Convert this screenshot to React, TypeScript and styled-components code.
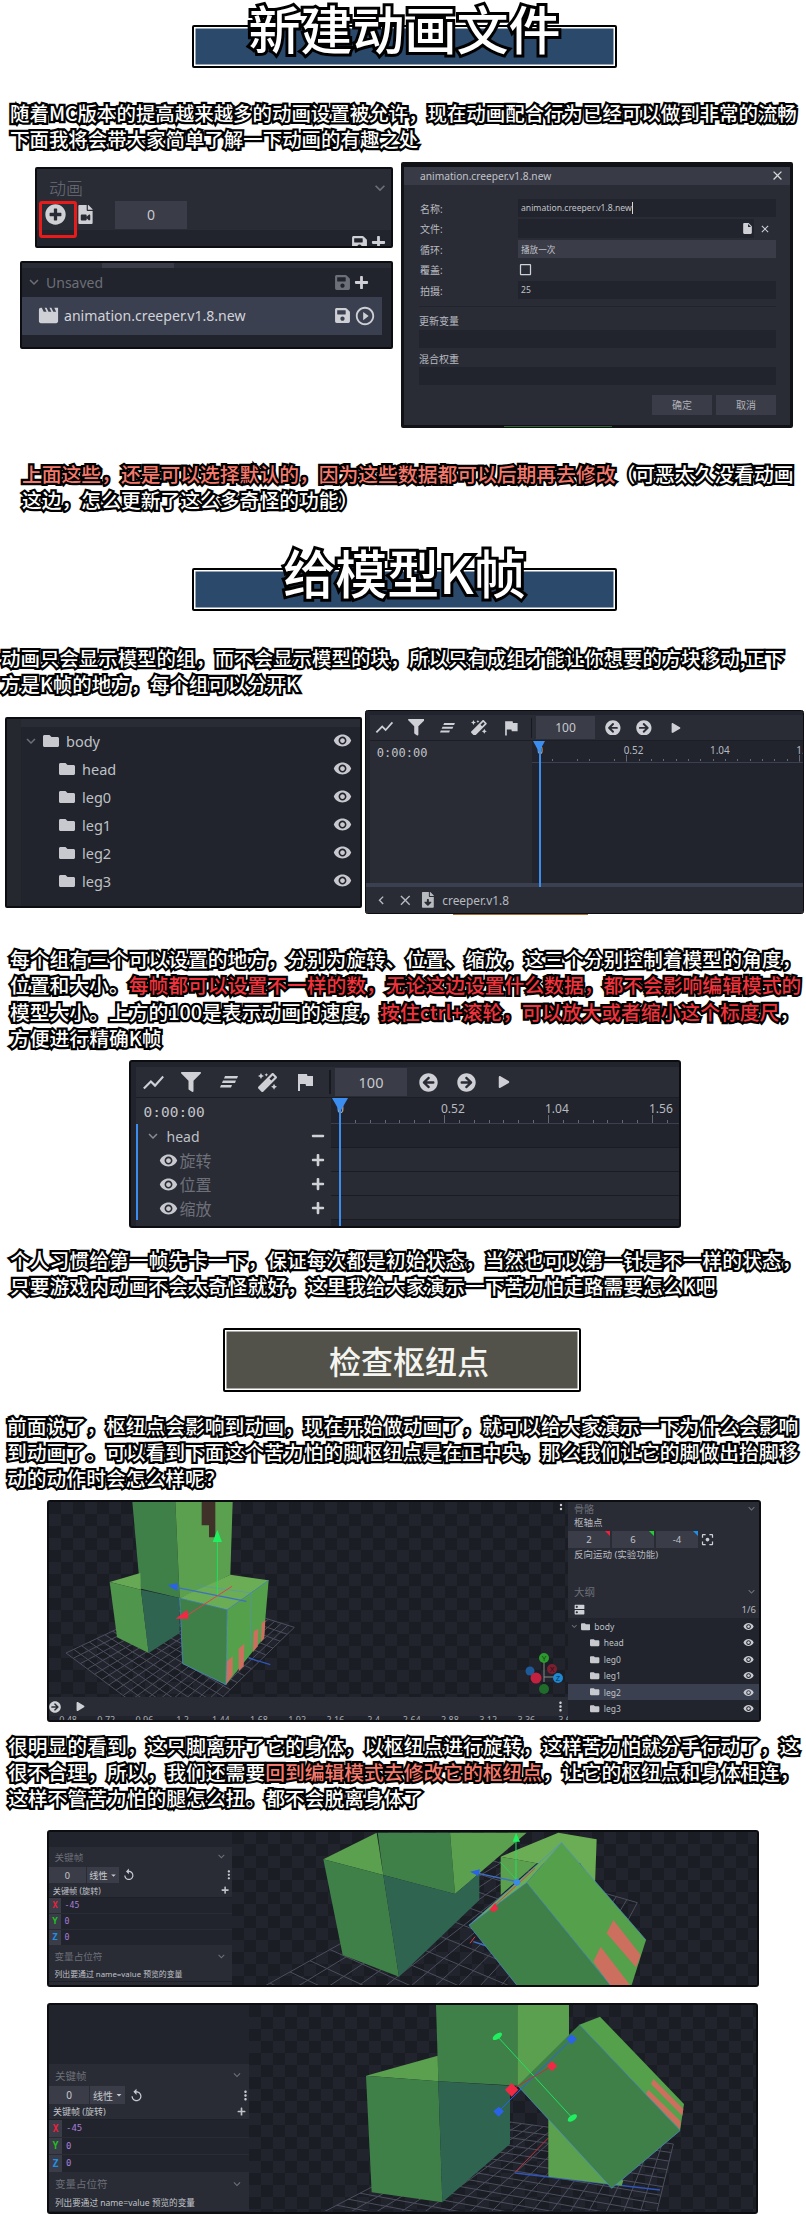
import React from "react";
import styled, { createGlobalStyle } from "styled-components";
import { FaFileVideo, FaSave, FaPlus, FaFolder, FaFilter, FaMagic, FaArrowCircleLeft, FaArrowCircleRight, FaPlay, FaPlusCircle, FaFileDownload, FaMinus } from "react-icons/fa";
import { MdExpandMore, MdMovie, MdPlayCircleOutline, MdInsertDriveFile, MdClose, MdCheckBoxOutlineBlank, MdVisibility, MdShowChart, MdFlag, MdFilterCenterFocus, MdReplay, MdDns, MdChevronLeft, MdArrowDropDown, MdMoreVert } from "react-icons/md";

const UI = `"Noto Sans", "Noto Sans CJK SC", sans-serif`;
const MONO = `"DejaVu Sans Mono", "Liberation Mono", monospace`;

const Global = createGlobalStyle`
  html, body { margin: 0; padding: 0; background: #fff; }
  body { overflow: hidden; font-family: ${UI}; }
  svg { flex-shrink: 0; }
`;

const Page = styled.main`
  width: 806px; height: 2214px; overflow: hidden;
  display: flex; flex-direction: column; align-items: flex-start;
`;

/* ---------- headings ---------- */
const Banner = styled.div<{ $top: number }>`
  position: relative; box-sizing: border-box; margin: ${p => p.$top}px 0 0 192px;
  width: 425px; height: 43px; background: #2b4a6b; border: 2px solid #000; border-radius: 2px;
  box-shadow: inset 0 0 0 1.5px #fff;
`;
const BannerTitle = styled.h1<{ $up: number }>`
  position: absolute; left: 0; right: 0; top: ${p => -p.$up}px; margin: 0; text-align: center;
  font: 500 52px/52px "Noto Sans CJK SC", sans-serif; color: #fff; white-space: nowrap;
  -webkit-text-stroke: 6px #000; paint-order: stroke fill;
`;
const PlainBanner = styled.h2`
  box-sizing: border-box; margin: 29px 0 0 223px; width: 358px; height: 64px; padding-left: 14px;
  display: flex; align-items: center; justify-content: center;
  background: #52524a; border: 2px solid #000; border-radius: 2px; box-shadow: inset 0 0 0 1.5px #fff;
  font: 500 32px/1 "Noto Sans CJK SC", sans-serif; color: #f4f4f0;
`;

/* ---------- outlined article text ---------- */
const Para = styled.div<{ $top: number; $x: number; $lh?: number; $size?: number }>`
  margin: ${p => p.$top}px 0 0 ${p => p.$x}px;
  font: 500 ${p => p.$size ?? 19.8}px/${p => p.$lh ?? 26}px "Noto Sans CJK SC", sans-serif;
  color: #fff; white-space: nowrap;
  -webkit-text-stroke: 4.5px #000; paint-order: stroke fill;
`;
const Line = styled.div``;
const Red = styled.span`color: #f0333c;`;
const Salmon = styled.span`color: #f4796c;`;

/* ---------- first row: panels ---------- */
const PanelRow = styled.section<{ $top: number }>`
  display: flex; margin-top: ${p => p.$top}px;
`;
const LeftStack = styled.div`
  width: 393px; padding-top: 5px; display: flex; flex-direction: column; align-items: flex-end; gap: 13px;
`;
const DarkCard = styled.div<{ $w: number; $h: number; $bg?: string }>`
  box-sizing: border-box; width: ${p => p.$w}px; height: ${p => p.$h}px; border: 2px solid #0c0d10; border-radius: 2px;
  background: ${p => p.$bg ?? "#21242c"}; overflow: hidden; position: relative; color: #cfd0d6;
`;
const PanelHead = styled.div`
  display: flex; align-items: center; justify-content: space-between; height: 38px; padding: 0 1px 0 12px;
  font-size: 17px; color: #6c6f78; font-weight: 300;
`;
const ToolRow = styled.div`
  display: flex; align-items: center; height: 28px; padding-left: 8px; color: #cfd0d6; margin-top: -6px;
`;
const NumberBox = styled.div`
  width: 72px; height: 28px; margin-left: 11px; background: #3a3d48; color: #c8c9cf; font-size: 14px;
  display: flex; align-items: center; justify-content: center;
`;
const RedFrame = styled.div`
  position: absolute; left: 2px; top: 32px; width: 38px; height: 37px; box-sizing: border-box;
  border: 3px solid #e81b1b; border-radius: 3px;
`;
const ClippedStrip = styled.div`
  height: 12px; margin-top: 1px; background: #21242c; overflow: hidden; display: flex; justify-content: flex-end;
  gap: 3px; padding: 5px 5px 0 0; color: #cfd0d6;
`;
const TabEdge = styled.div`
  height: 5px; background: #292c35; display: flex; padding-left: 77px; 
`;
const TabPiece = styled.div`
  width: 72px; background: #3a3d48; margin-left: 3px;
`;
const UnsavedRow = styled.div`
  height: 29px; display: flex; align-items: center; padding: 0 22px 0 3px; gap: 3px;
  font-size: 14px; color: #6c6f78;
`;
const Spacer = styled.div`flex: 1;`;
const AnimRow = styled.div`
  width: 360px; height: 38px; background: #3b4050; display: flex; align-items: center; gap: 4px;
  padding: 0 6px 0 15px; box-sizing: border-box; font-size: 14.1px; color: #d2d3d9;
`;
const IconPair = styled.div`display: flex; align-items: center; gap: 3px;`;

/* modal */
const Modal = styled.div`
  position: relative; box-sizing: border-box; width: 392px; height: 266px; margin-left: 8px; background: #292c35;
  border: 3px solid #111216; border-top-width: 5px; border-radius: 2px; color: #b8bac0; font-size: 10px;
`;
const ModalHead = styled.div`
  height: 18px; background: #383b46; display: flex; align-items: center; justify-content: space-between;
  padding: 0 5px 0 16px; font-size: 10.2px; color: #c2c3c9;
`;
const ModalBody = styled.div`padding: 14px 14px 0 15px;`;
const FormRows = styled.div`display: flex; flex-direction: column; gap: 2px;`;
const FormRow = styled.div`
  display: grid; grid-template-columns: 98px 1fr; align-items: center; height: 18.5px; padding-left: 1px;
`;
const Field = styled.div<{ $w?: number; $light?: boolean }>`
  box-sizing: border-box; height: 100%; width: ${p => (p.$w ? p.$w + "px" : "100%")};
  background: ${p => (p.$light ? "#3a3d48" : "#21242c")};
  display: flex; align-items: center; padding-left: 3px; font-size: 8.6px; color: #c2c3c9;
`;
const FileField = styled(Field)`justify-content: flex-end; padding-right: 0; color: #cfd0d6;`;
const Caret = styled.span`display: inline-block; width: 1px; height: 12px; background: #d8d8d8;`;
const FieldLine = styled.div`display: flex; height: 100%; align-items: center; color: #d0d1d6;`;
const FieldEnd = styled.div`flex: 1; display: flex; justify-content: center;`;
const Divider = styled.div`height: 1px; background: #21242c; margin-top: 7px;`;
const BlockLabel = styled.div<{ $top: number }>`margin-top: ${p => p.$top}px; line-height: 14px; height: 14px;`;
const BlockField = styled.div<{ $top: number }>`margin-top: ${p => p.$top}px; height: 18px; background: #21242c;`;
const ModalActions = styled.div`display: flex; justify-content: flex-end; gap: 4px; margin-top: 9.5px;`;
const ModalBtn = styled.div`
  width: 60px; height: 20px; background: #3a3d48; display: flex; align-items: center; justify-content: center; color: #b0b2b8;
`;
const Sliver = styled.div<{ $l: number; $w: number; $c: string }>`
  position: absolute; left: ${p => p.$l}px; bottom: -2px; width: ${p => p.$w}px; height: 1px; background: ${p => p.$c};
`;

/* ---------- outliner ---------- */
const TimelineSplit = styled.section`display: flex; margin-top: 13px; align-items: flex-start;`;
const OutlinerCard = styled(DarkCard)`margin: 7px 0 0 5px;`;
const OutlinerTop = styled.div`height: 8px; background: #292c35; border-left: 14px solid #25282f;`;
const OutlinerBody = styled.div`border-left: 14px solid #25282f; height: 100%;`;
const OutlineList = styled.div<{ $zoom?: number }>`zoom: ${p => p.$zoom ?? 1};`;
const OutlineRow = styled.div<{ $level: number; $active?: boolean }>`
  height: 28px; display: flex; align-items: center; position: relative; color: #bfc1c7; font-size: 14.5px;
  padding-left: ${p => (p.$level ? 38 : 22)}px; padding-right: 8px;
  background: ${p => (p.$active ? "#3b4050" : "transparent")};
`;
const OutlineChevron = styled.span`position: absolute; left: 1px; top: 5px; color: #6c6f78; display: flex;`;
const OutlineLabel = styled.span`margin-left: 7px; flex: 1;`;

/* ---------- timeline ---------- */
const TimelineRoot = styled.section<{ $zoom: number; $w: number; $h: number; $left: number; $top?: number }>`
  zoom: ${p => p.$zoom}; box-sizing: border-box; width: ${p => p.$w}px; height: ${p => p.$h}px;
  margin: ${p => p.$top ?? 0}px 0 0 ${p => p.$left}px;
  background: #21242c; border: 2px solid #0c0d10; border-radius: 3px; display: flex; flex-direction: column;
  position: relative; color: #cfd0d6;
`;
const TopStrip = styled.div`height: 5px; flex: none;`;
const Toolbar = styled.div`
  height: 30px; flex: none; margin-left: 5px; background: #292c35; border-bottom: 1px solid #1c1e25; display: flex; align-items: center;
`;
const ToolSlot = styled.div`width: 38px; flex: none; display: flex; justify-content: center; align-items: center;`;
const ToolSlots = styled.div`display: flex; margin-left: -1.5px;`;
const ToolSep = styled.div`width: 2px; height: 24px; background: #17191e; margin: 0 4px 0 5px;`;
const SpeedBox = styled.div`
  width: 72px; height: 28px; background: #3a3d48; display: flex; align-items: center; justify-content: center;
  font-size: 14.5px; color: #c8c9cf; margin-right: 2px;
`;
const Track = styled.div`flex: 1; min-height: 0; position: relative; margin-left: 5px; display: flex; flex-direction: column;`;
const HeadRow = styled.div`display: flex; height: 26px; flex: none;`;
const TimeCell = styled.div`
  width: 195px; background: #292c35; display: flex; align-items: center; padding-left: 8px; box-sizing: border-box;
  font: 14.5px ${MONO}; color: #c2c3c9; padding-top: 2px;
`;
const Ruler = styled.div`
  flex: 1; overflow: hidden; display: flex; align-items: flex-start; padding-top: 2px; padding-left: 6.5px;
  border-bottom: 1px solid #3b4050; color: #b8bac0; font-size: 12px; line-height: 18px;
  background-image:
    repeating-linear-gradient(90deg, #666a75 0 1px, transparent 1px 14.86px),
    repeating-linear-gradient(90deg, #666a75 0 1px, transparent 1px 104px);
  background-size: 100% 3px, 100% 8px;
  background-position: 9.5px 100%, 9.5px 100%;
  background-repeat: no-repeat;
`;
const RulerMark = styled.span`width: 104px; flex: none;`;
const RowsArea = styled.div`flex: 1; min-height: 0; display: flex;`;
const LeftPane = styled.div`width: 195px; flex: none; background: #292c35; position: relative;`;
const RightPane = styled.div`flex: 1; display: flex; flex-direction: column;`;
const GroupColumn = styled.div`border-left: 2px solid #3b8ef0; margin-left: 0;`;
const TrackLabel = styled.div<{ $sub?: boolean }>`
  height: 24px; display: flex; align-items: center; padding: 0 4px 0 ${p => (p.$sub ? 21 : 6)}px; gap: ${p => (p.$sub ? 2 : 5)}px;
  font-size: ${p => (p.$sub ? 16 : 14)}px; color: ${p => (p.$sub ? "#6e7079" : "#bfc1c7")};
  font-family: ${UI};
`;
const TrackEnd = styled.div`margin-left: auto; margin-right: 2px; display: flex; color: #d0d1d6;`;
const TrackLane = styled.div<{ $dark?: boolean }>`
  height: 23px; flex: none; border-bottom: 1px solid #1a1c22; background: ${p => (p.$dark ? "#21242c" : "#282b33")};
`;
const Playhead = styled.div`
  position: absolute; left: 203.5px; top: 0; bottom: 0; width: 2px; background: #3b8ef0;
  &::before {
    content: ""; position: absolute; left: -7px; top: 0; border: 8px solid transparent; border-top: 14px solid #3b8ef0; border-bottom: 0;
  }
`;
const StatusBar = styled.div`height: 5px; background: #3b4050; flex: none; margin-left: -5px;`;
const FooterBar = styled.div`
  height: 31px; flex: none; display: flex; align-items: center; background: #292c35; gap: 8px; padding-left: 9px;
  font-size: 14.3px; color: #b8bac0;
`;

/* ---------- scenes ---------- */
const SceneCard = styled.section<{ $top: number; $w: number; $h: number }>`
  box-sizing: border-box; margin: ${p => p.$top}px 0 0 47px; width: ${p => p.$w}px; height: ${p => p.$h}px;
  background: #21242c; border: 2px solid #0c0d10; border-radius: 3px; display: flex; overflow: hidden;
`;
const SceneColumn = styled.div`width: 519px; flex: none; display: flex; flex-direction: column;`;
const Viewport = styled.div<{ $w?: number; $h?: number }>`
  ${p => (p.$w ? `width:${p.$w}px; flex:none;` : "flex:1;")} height: ${p => (p.$h ? p.$h + "px" : "100%")};
  background: repeating-conic-gradient(#21242c 0 25%, #1a1d24 0 50%) 0 0 / 24px 24px;
  overflow: hidden; line-height: 0;
`;
const MiniBar = styled.div`
  height: 19px; background: #292c35; display: flex; align-items: center; color: #cfd0d6; position: relative;
`;
const MiniTicks = styled.div`
  height: 4px; overflow: hidden; display: flex; background: #21242c; color: #a8aab0; font-size: 9px; line-height: 12px;
`;
const MiniTick = styled.span`width: 38.2px; flex: none; margin-top: -2px; text-align: center;`;
const SidePanel = styled.aside`
  width: 191px; flex: none; background: #292c35; color: #b8bac0; font-size: 9.5px; display: flex; flex-direction: column;
`;
const SideHead = styled.div<{ $h: number; $size: number; $top?: number }>`
  height: ${p => p.$h}px; margin-top: ${p => p.$top ?? 0}px; padding: 0 1px 0 6px; display: flex; align-items: center; justify-content: space-between;
  color: #6c6f78; font-size: ${p => p.$size}px; overflow: hidden;
`;
const SideText = styled.div<{ $top: number }>`margin-top: ${p => p.$top}px; padding-left: 6px; line-height: 14px;`;
const TripleRow = styled.div`display: flex; align-items: center; margin-top: 1px; height: 17px;`;
const TripleBox = styled.div<{ $corner: string }>`
  position: relative; width: 42px; height: 17px; margin-right: 2px; background: #3a3d48; color: #c0c2c8;
  display: flex; align-items: center; justify-content: center; font-size: 9.5px;
  &::after {
    content: ""; position: absolute; right: 0; top: 0; border-top: 5px solid ${p => p.$corner}; border-left: 5px solid transparent;
  }
`;
const CountRow = styled.div`
  height: 17px; display: flex; align-items: center; justify-content: space-between; padding: 0 3px 0 5px; color: #b8bac0; font-size: 9.5px;
`;
const OutlineDark = styled.div`flex: 1; background: #21242c;`;

/* keyframe panel */
const KeyPanel = styled.aside<{ $zoom: number; $w: number; $gap: number }>`
  zoom: ${p => p.$zoom}; width: ${p => p.$w}px; flex: none; height: 100%; color: #b8bac0; font-size: 10px;
  padding-top: ${p => p.$gap}px; box-sizing: border-box; display: flex; flex-direction: column; white-space: nowrap;
`;
const KeyHead = styled.div`
  height: 22px; background: #292c35; display: flex; align-items: center; justify-content: space-between;
  padding: 0 5px 0 6px; color: #6c6f78; font-size: 10.5px;
`;
const KeyControls = styled.div`height: 18px; background: #292c35; display: flex; align-items: center; gap: 1px; color: #c8c9cf;`;
const KeyZero = styled.div`width: 40px; height: 18px; background: #3a3d48; display: flex; align-items: center; justify-content: center;`;
const KeySelect = styled.div`width: 35px; height: 18px; background: #3a3d48; display: flex; align-items: center; padding-left: 3px; box-sizing: border-box;`;
const KeyReset = styled.div`margin-left: 3px; display: flex;`;
const KeyDots = styled.div`margin-left: auto; display: flex; margin-right: -4px;`;
const KeyTitle = styled.div`
  height: 16px; background: #292c35; display: flex; align-items: center; justify-content: space-between; padding: 0 3px 0 4px;
  border-bottom: 1px solid #1e2027; color: #c0c2c8; box-sizing: border-box; font-size: 9px;
`;
const AxisRow = styled.div`
  height: 17.5px; display: flex; background: #21242c; border-bottom: 1.5px solid #292c35; box-sizing: border-box;
`;
const AxisBadge = styled.div<{ $c: string }>`
  width: 13px; background: #3a3d48; display: flex; align-items: center; justify-content: center;
  font: 700 10px ${MONO}; color: ${p => p.$c}; margin-right: 4px;
`;
const AxisValue = styled.div`display: flex; align-items: center; font: 9px ${MONO}; color: #a77ed8;`;
const KeyNote = styled.div`
  height: 16px; background: #292c35; padding-left: 6px; display: flex; align-items: center; color: #c0c2c8; font-size: 8.6px; border-bottom: 1px solid #1e2027;
`;
const KeyFill = styled.div`flex: 1; background: #292c35;`;

/* ---------- drawings ---------- */
type Pt = [number, number];
const lerp = (a: Pt, b: Pt, t: number): Pt => [a[0] + (b[0] - a[0]) * t, a[1] + (b[1] - a[1]) * t];

function FloorGrid({ q, n }: { q: [Pt, Pt, Pt, Pt]; n: number }) {
  const [a, b, c, d] = q;
  const out: React.ReactNode[] = [];
  for (let i = 0; i <= n; i++) {
    const t = i / n;
    const p1 = lerp(a, b, t), p2 = lerp(d, c, t), p3 = lerp(a, d, t), p4 = lerp(b, c, t);
    out.push(<line key={"u" + i} x1={p1[0]} y1={p1[1]} x2={p2[0]} y2={p2[1]} />);
    out.push(<line key={"v" + i} x1={p3[0]} y1={p3[1]} x2={p4[0]} y2={p4[1]} />);
  }
  return <g stroke="#4b4e5c" strokeWidth="3">{out}</g>;
}

const P = { dark: "#3e8048", mid: "#5aa04e", face: "#55a04b", top: "#6bad55", deep: "#2f6550", pink: "#cc6f5e", brown: "#40302a", blue: "#4f8fd8" };
type Poly = [string, string];
const Polys = ({ items }: { items: Poly[] }) => <>{items.map(([pts, f], i) => <polygon key={i} points={pts} fill={f} />)}</>;

function SceneOne() {
  const polys: Poly[] = [
    ["256,12 385,12 398,300 282,272 275,225", P.dark],
    ["385,12 557,12 550,230 450,280 398,300", P.mid],
    ["464,12 505,12 505,118 486,118 486,82 464,82", P.brown],
    ["188,252 280,225 282,275", "#66a854"],
    ["188,252 282,275 305,465 210,418", "#4f964c"],
    ["282,275 398,300 398,405 305,465", P.deep],
    ["398,300 550,230 665,247 541,335", P.top],
    ["398,300 541,335 537,560 407,497", P.dark],
    ["541,335 665,247 650,420 537,560", P.face],
    ["540,490 557,475 557,530 537,560", P.pink],
    ["575,452 592,437 590,505 575,520", P.pink],
    ["620,400 634,392 632,445 618,462", P.pink],
    ["644,375 655,367 652,420 642,432", P.pink],
  ];
  return (
    <svg width="519" height="195" viewBox="0 0 519 195">
      <g transform="translate(-2 -4) scale(.33333)">
        <FloorGrid q={[[57, 465], [430, 290], [742, 388], [400, 720]]} n={16} />
        <Polys items={polys} />
        <polyline points="398,300 541,335 665,247" fill="none" stroke={P.blue} strokeWidth="2" />
        <polyline points="398,300 407,497 537,560 541,335" fill="none" stroke={P.blue} strokeWidth="2" />
        <line x1="612" y1="285" x2="610" y2="445" stroke={P.blue} strokeWidth="1.5" />
        <line x1="450" y1="262" x2="612" y2="285" stroke={P.blue} strokeWidth="1.5" />
        <line x1="605" y1="480" x2="670" y2="500" stroke="#2f56b8" strokeWidth="4" />
        <line x1="511" y1="130" x2="511" y2="292" stroke="#20e060" strokeWidth="3" />
        <polygon points="497,132 525,132 511,95" fill="#20f060" />
        <line x1="372" y1="265" x2="598" y2="310" stroke="#3d6fc8" strokeWidth="4" />
        <polygon points="362,262 392,255 390,278" fill="#2a62e8" />
        <line x1="555" y1="265" x2="405" y2="362" stroke="#e04050" strokeWidth="3" />
        <polygon points="386,362 420,335 425,362" fill="#f02a44" />
      </g>
      <circle cx="512" cy="3" r="1.2" fill="#cfd0d6" /><circle cx="512" cy="7" r="1.2" fill="#cfd0d6" />
      <g fontFamily="Liberation Sans, sans-serif" fontSize="7" textAnchor="middle">
        <line x1="495" y1="159" x2="495" y2="180" stroke="#888" strokeWidth="1" />
        <line x1="495" y1="175" x2="507" y2="175" stroke="#888" strokeWidth="1" />
        <circle cx="495" cy="156" r="5" fill="#2c9a2c" /><text x="495" y="159" fill="#0e3a0e">Y</text>
        <circle cx="495" cy="187" r="5" fill="#1e6b2a" />
        <circle cx="481" cy="169" r="4.5" fill="#1e5a9a" />
        <circle cx="503" cy="167" r="5" fill="#7a2030" /><text x="503" y="170" fill="#2a0a10">X</text>
        <circle cx="509" cy="176" r="5" fill="#1e88d0" /><text x="509" y="179" fill="#083050">Z</text>
        <circle cx="487" cy="176" r="5.5" fill="#c4203f" />
      </g>
    </svg>
  );
}

function SceneTwo() {
  const polys: Poly[] = [
    ["812,80 985,8 1100,28 1095,165 1050,100 920,100", P.top],
    ["812,80 920,100 812,195", P.mid],
    ["280,88 440,8 460,135", P.mid],
    ["443,8 660,8 675,192 460,135", P.dark],
    ["660,8 890,8 675,192", P.mid],
    ["280,88 460,135 507,440 338,375", P.dark],
    ["460,135 675,192 748,130 748,210 507,440", P.deep],
    ["717,286 995,38 890,158", P.top],
    ["890,158 995,38 1248,330 1205,465 1140,465", P.face],
    ["717,286 890,158 1140,465 860,465", P.dark],
    ["1150,270 1232,375 1218,412 1130,310", P.pink],
    ["1112,350 1200,465 1140,465 1090,395", P.pink],
  ];
  return (
    <svg width="525" height="153" viewBox="0 0 525 153">
      <g transform="translate(-2 -2) scale(.33333)">
        <FloorGrid q={[[-60, 560], [780, 90], [1222, 218], [800, 1000]]} n={14} />
        <line x1="735" y1="320" x2="720" y2="340" stroke="#e04050" strokeWidth="3" />
        <line x1="730" y1="335" x2="770" y2="348" stroke="#3d6fc8" strokeWidth="4" />
        <Polys items={polys} />
        <polyline points="717,286 890,158 1140,465" fill="none" stroke={P.blue} strokeWidth="2" />
        <polyline points="717,286 995,38 1248,330" fill="none" stroke={P.blue} strokeWidth="2" />
        <line x1="890" y1="158" x2="995" y2="38" stroke={P.blue} strokeWidth="1.5" />
        <line x1="717" y1="286" x2="860" y2="465" stroke={P.blue} strokeWidth="2" />
        <line x1="858" y1="30" x2="858" y2="150" stroke="#20e060" strokeWidth="3" />
        <line x1="810" y1="95" x2="860" y2="150" stroke="#20e060" strokeWidth="2" />
        <polygon points="848,35 870,35 858,8" fill="#20f060" />
        <line x1="735" y1="128" x2="860" y2="155" stroke="#3d6fc8" strokeWidth="4" />
        <polygon points="720,125 750,118 745,138" fill="#2a62e8" />
        <line x1="915" y1="115" x2="790" y2="230" stroke="#e04050" strokeWidth="3" />
        <polygon points="778,240 796,218 804,238 792,246" fill="#f02a44" />
        <circle cx="861" cy="157" r="10" fill="#3a8ae8" />
      </g>
    </svg>
  );
}

function SceneThree() {
  const polys: Poly[] = [
    ["288,3 532,3 532,245 295,232", P.dark],
    ["532,3 687,3 687,255 532,245", P.mid],
    ["78,215 293,155 295,232", P.mid],
    ["78,215 295,232 307,595 95,565", P.dark],
    ["295,232 510,245 510,420 307,595", P.deep],
    ["625,345 700,400 850,530 845,545 625,518", P.mid],
    ["718,62 780,38 1032,300 1020,380", P.face],
    ["718,62 1020,380 815,553 533,245", P.dark],
    ["940,225 1030,315 1027,335 933,240", P.pink],
    ["925,257 1022,352 1020,375 918,270", P.pink],
  ];
  return (
    <svg width="507" height="206" viewBox="0 0 507 206">
      <g transform="translate(91 -1) scale(.33333)">
        <FloorGrid q={[[-80, 640], [480, 350], [1000, 420], [900, 830]]} n={16} />
        <line x1="525" y1="505" x2="625" y2="402" stroke="#c03040" strokeWidth="3" />
        <line x1="525" y1="507" x2="960" y2="558" stroke="#2f56b8" strokeWidth="4" />
        <Polys items={polys} />
        <polyline points="718,62 1020,380 815,553 533,245" fill="none" stroke={P.blue} strokeWidth="2" />
        <line x1="472" y1="97" x2="697" y2="342" stroke="#20e060" strokeWidth="3" />
        <line x1="476" y1="322" x2="695" y2="105" stroke="#2a62e8" strokeWidth="3" />
        <line x1="515" y1="257" x2="636" y2="186" stroke="#c03040" strokeWidth="3" />
        <g transform="rotate(-35 472 97)"><ellipse cx="472" cy="97" rx="16" ry="8" fill="#20f060" /></g>
        <g transform="rotate(-35 697 342)"><ellipse cx="697" cy="342" rx="16" ry="8" fill="#20f060" /></g>
        <polygon points="476,308 492,322 476,338 460,322" fill="#2a62e8" />
        <polygon points="695,91 711,105 695,121 679,105" fill="#2a62e8" />
        <polygon points="515,237 535,257 515,278 495,257" fill="#f02a44" />
        <polygon points="636,171 652,186 636,202 620,186" fill="#f02a44" />
      </g>
    </svg>
  );
}

const SkewBars = () => (
  <svg width="18" height="12" viewBox="0 0 18 12" fill="#cfd0d6">
    <polygon points="5,0 18,0 17,2.5 4,2.5" /><polygon points="3,4.5 16,4.5 15,7 2,7" /><polygon points="1,9 12,9 11,11.5 0,11.5" />
  </svg>
);

function TimelineTools() {
  return (
    <Toolbar>
      <ToolSlots>
        <ToolSlot><MdShowChart size={25} /></ToolSlot>
        <ToolSlot><FaFilter size={20} /></ToolSlot>
        <ToolSlot><SkewBars /></ToolSlot>
        <ToolSlot><FaMagic size={19} /></ToolSlot>
        <ToolSlot><MdFlag size={24} /></ToolSlot>
      </ToolSlots>
      <ToolSep />
      <SpeedBox>100</SpeedBox>
      <ToolSlot><FaArrowCircleLeft size={19} /></ToolSlot>
      <ToolSlot><FaArrowCircleRight size={19} /></ToolSlot>
      <ToolSlot><FaPlay size={12} /></ToolSlot>
    </Toolbar>
  );
}

const Head = () => (
  <HeadRow>
    <TimeCell>0:00:00</TimeCell>
    <Ruler>
      <RulerMark>0</RulerMark><RulerMark>0.52</RulerMark><RulerMark>1.04</RulerMark><RulerMark>1.56</RulerMark><RulerMark>2.08</RulerMark>
    </Ruler>
  </HeadRow>
);

const outline = ["body", "head", "leg0", "leg1", "leg2", "leg3"];
function Outline({ zoom, active }: { zoom?: number; active?: string }) {
  return (
    <OutlineList $zoom={zoom}>
      {outline.map((n, i) => (
        <OutlineRow key={n} $level={i ? 1 : 0} $active={n === active}>
          {i === 0 && <OutlineChevron><MdExpandMore size={18} /></OutlineChevron>}
          <FaFolder size={16} color="#c8c9cf" />
          <OutlineLabel>{n}</OutlineLabel>
          <MdVisibility size={19} color="#c8c9cf" />
        </OutlineRow>
      ))}
    </OutlineList>
  );
}

function KeyframePanel({ zoom, w, gap }: { zoom: number; w: number; gap: number }) {
  return (
    <KeyPanel $zoom={zoom} $w={w} $gap={gap}>
      <KeyHead>关键帧<MdExpandMore size={14} /></KeyHead>
      <KeyControls>
        <KeyZero>0</KeyZero>
        <KeySelect>线性<MdArrowDropDown size={12} /></KeySelect>
        <KeyReset><MdReplay size={15} /></KeyReset>
        <KeyDots><MdMoreVert size={15} /></KeyDots>
      </KeyControls>
      <KeyTitle>关键帧 (旋转)<FaPlus size={9} /></KeyTitle>
      <AxisRow><AxisBadge $c="#e8213f">X</AxisBadge><AxisValue>-45</AxisValue></AxisRow>
      <AxisRow><AxisBadge $c="#20c020">Y</AxisBadge><AxisValue>0</AxisValue></AxisRow>
      <AxisRow><AxisBadge $c="#1e90e8">Z</AxisBadge><AxisValue>0</AxisValue></AxisRow>
      <KeyHead>变量占位符<MdExpandMore size={14} /></KeyHead>
      <KeyNote>列出要通过 name=value 预览的变量</KeyNote>
      <KeyFill />
    </KeyPanel>
  );
}

export default function App() {
  const ticks = ["0.48", "0.72", "0.96", "1.2", "1.44", "1.68", "1.92", "2.16", "2.4", "2.64", "2.88", "3.12", "3.36", "3.6"];
  return (
    <Page>
      <Global />
      <Banner $top={25}><BannerTitle $up={25}>新建动画文件</BannerTitle></Banner>
      <Para $top={32} $x={10} $size={19.45}>
        <Line>随着MC版本的提高越来越多的动画设置被允许，现在动画配合行为已经可以做到非常的流畅</Line>
        <Line>下面我将会带大家简单了解一下动画的有趣之处</Line>
      </Para>

      <PanelRow $top={10}>
        <LeftStack>
          <DarkCard $w={358} $h={81} $bg="#292c35">
            <PanelHead>动画<MdExpandMore size={20} /></PanelHead>
            <ToolRow>
              <FaPlusCircle size={21} />
              <ToolSlot><FaFileVideo size={19} /></ToolSlot>
              <NumberBox>0</NumberBox>
            </ToolRow>
            <ClippedStrip><FaSave size={17} /><FaPlus size={15} /></ClippedStrip>
            <RedFrame />
          </DarkCard>
          <DarkCard $w={373} $h={88}>
            <TabEdge><TabPiece /></TabEdge>
            <UnsavedRow>
              <MdExpandMore size={18} />Unsaved<Spacer />
              <IconPair><FaSave size={17} /><FaPlus size={15} color="#cfd0d6" /></IconPair>
            </UnsavedRow>
            <AnimRow>
              <MdMovie size={23} color="#cfd0d6" />animation.creeper.v1.8.new<Spacer />
              <IconPair><FaSave size={17} color="#cfd0d6" /><MdPlayCircleOutline size={22} color="#cfd0d6" /></IconPair>
            </AnimRow>
          </DarkCard>
        </LeftStack>
        <Modal>
          <ModalHead>animation.creeper.v1.8.new<MdClose size={15} color="#d8d8d8" /></ModalHead>
          <ModalBody>
            <FormRows>
              <FormRow>名称:<Field>animation.creeper.v1.8.new<Caret /></Field></FormRow>
              <FormRow>文件:
                <FieldLine><FileField $w={236}><MdInsertDriveFile size={13} /></FileField><FieldEnd><MdClose size={12} /></FieldEnd></FieldLine>
              </FormRow>
              <FormRow>循环:<Field $light>播放一次</Field></FormRow>
              <FormRow>覆盖:<FieldLine><MdCheckBoxOutlineBlank size={15} /></FieldLine></FormRow>
              <FormRow>拍摄:<Field>25</Field></FormRow>
            </FormRows>
            <Divider />
            <BlockLabel $top={7}>更新变量</BlockLabel>
            <BlockField $top={2} />
            <BlockLabel $top={4}>混合权重</BlockLabel>
            <BlockField $top={1} />
            <ModalActions><ModalBtn>确定</ModalBtn><ModalBtn>取消</ModalBtn></ModalActions>
          </ModalBody>
          <Sliver $l={100} $w={108} $c="#2d6a2f" />
        </Modal>
      </PanelRow>

      <Para $top={33} $x={22} $lh={26.5}>
        <Line><Salmon>上面这些，还是可以选择默认的，因为这些数据都可以后期再去修改</Salmon>（可恶太久没看动画</Line>
        <Line>这边，怎么更新了这么多奇怪的功能）</Line>
      </Para>

      <Banner $top={54}><BannerTitle $up={24}>给模型K帧</BannerTitle></Banner>
      <Para $top={34} $x={1} $size={19.45}>
        <Line>动画只会显示模型的组，而不会显示模型的块，所以只有成组才能让你想要的方块移动,正下</Line>
        <Line>方是K帧的地方，每个组可以分开K</Line>
      </Para>

      <TimelineSplit>
        <OutlinerCard $w={357} $h={191}>
          <OutlinerTop />
          <OutlinerBody><Outline /></OutlinerBody>
        </OutlinerCard>
        <TimelineRoot $zoom={0.83} $w={529} $h={246} $left={3.6}>
          <TopStrip />
          <TimelineTools />
          <Track>
            <Head />
            <RowsArea><LeftPane /><RightPane /></RowsArea>
            <StatusBar />
            <Playhead />
          </Track>
          <FooterBar>
            <MdChevronLeft size={20} />
            <MdClose size={20} />
            <FaFileDownload size={19} />
            creeper.v1.8
          </FooterBar>
          <Sliver $l={105} $w={162} $c="#a86a30" />
        </TimelineRoot>
      </TimelineSplit>

      <Para $top={32} $x={10} $lh={26.3}>
        <Line>每个组有三个可以设置的地方，分别为旋转、位置、缩放，这三个分别控制着模型的角度，</Line>
        <Line>位置和大小。<Red>每帧都可以设置不一样的数，无论这边设置什么数据，都不会影响编辑模式的</Red></Line>
        <Line>模型大小。上方的100是表示动画的速度，<Red>按住ctrl+滚轮，可以放大或者缩小这个标度尺</Red>，</Line>
        <Line>方便进行精确K帧</Line>
      </Para>

      <TimelineRoot $zoom={1} $w={552} $h={168} $left={128.5} $top={9}>
        <TopStrip />
        <TimelineTools />
        <Track>
          <Head />
          <RowsArea>
            <LeftPane>
              <GroupColumn>
                <TrackLabel><MdExpandMore size={18} color="#8a8c94" />head<TrackEnd><FaMinus size={14} /></TrackEnd></TrackLabel>
                {["旋转", "位置", "缩放"].map(t => (
                  <TrackLabel key={t} $sub><MdVisibility size={19} color="#c8c9cf" />{t}<TrackEnd><FaPlus size={14} /></TrackEnd></TrackLabel>
                ))}
              </GroupColumn>
            </LeftPane>
            <RightPane>
              <TrackLane $dark /><TrackLane /><TrackLane /><TrackLane />
            </RightPane>
          </RowsArea>
          <Playhead />
        </Track>
      </TimelineRoot>

      <Para $top={19} $x={10}>
        <Line>个人习惯给第一帧先卡一下，保证每次都是初始状态，当然也可以第一针是不一样的状态，</Line>
        <Line>只要游戏内动画不会太奇怪就好，这里我给大家演示一下苦力怕走路需要怎么K吧</Line>
      </Para>

      <PlainBanner>检查枢纽点</PlainBanner>

      <Para $top={21} $x={7}>
        <Line>前面说了，枢纽点会影响到动画，现在开始做动画了，就可以给大家演示一下为什么会影响</Line>
        <Line>到动画了。可以看到下面这个苦力怕的脚枢纽点是在正中央，那么我们让它的脚做出抬脚移</Line>
        <Line>动的动作时会怎么样呢？</Line>
      </Para>

      <SceneCard $top={9} $w={714} $h={222}>
        <SceneColumn>
          <Viewport $h={195}><SceneOne /></Viewport>
          <MiniBar>
            <FaArrowCircleRight size={12} />
            <ToolSlot><FaPlay size={9} /></ToolSlot>
            <Spacer />
            <MdMoreVert size={15} />
          </MiniBar>
          <MiniTicks>{ticks.map(t => <MiniTick key={t}>{t}</MiniTick>)}</MiniTicks>
        </SceneColumn>
        <SidePanel>
          <SideHead $h={12} $size={10}>骨骼<MdExpandMore size={13} /></SideHead>
          <SideText $top={2}>枢轴点</SideText>
          <TripleRow>
            <TripleBox $corner="#f0203c">2</TripleBox>
            <TripleBox $corner="#20d030">6</TripleBox>
            <TripleBox $corner="#1e90e8">-4</TripleBox>
            <MdFilterCenterFocus size={15} color="#d0d1d6" />
          </TripleRow>
          <SideText $top={0}>反向运动 (实验功能)</SideText>
          <SideHead $h={20} $size={10.5} $top={19}>大纲<MdExpandMore size={13} /></SideHead>
          <CountRow><MdDns size={13} color="#d0d1d6" />1/6</CountRow>
          <OutlineDark><Outline zoom={0.586} active="leg2" /></OutlineDark>
        </SidePanel>
      </SceneCard>

      <Para $top={11} $x={8}>
        <Line>很明显的看到，这只脚离开了它的身体，以枢纽点进行旋转，这样苦力怕就分手行动了，这</Line>
        <Line>很不合理，所以，我们还需要<Salmon>回到编辑模式去修改它的枢纽点</Salmon>，让它的枢纽点和身体相连，</Line>
        <Line>这样不管苦力怕的腿怎么扭。都不会脱离身体了</Line>
      </Para>

      <SceneCard $top={19} $w={712} $h={157}>
        <KeyframePanel zoom={0.915} w={200} gap={16} />
        <Viewport $w={525}><SceneTwo /></Viewport>
      </SceneCard>

      <SceneCard $top={16} $w={711} $h={211}>
        <KeyframePanel zoom={1} w={200} gap={59} />
        <Viewport><SceneThree /></Viewport>
      </SceneCard>
    </Page>
  );
}
